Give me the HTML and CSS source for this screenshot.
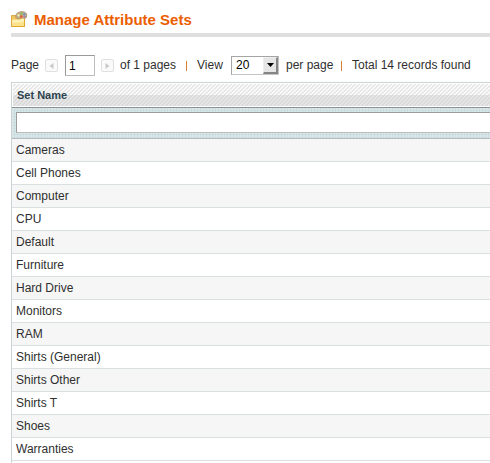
FILE: index.html
```html
<!DOCTYPE html>
<html lang="en">
<head>
<meta charset="utf-8">
<title>Manage Attribute Sets</title>
<link rel="stylesheet" href="styles.css">
</head>
<body>
<main>
<header class="page-head">
<svg class="head-icon" width="17" height="16" viewBox="0 0 17 16">
<path d="M.5 4.500h4l1 2h8v9H.5z" fill="#efc65f" stroke="#dba94a"/>
<path d="M5 6.500C4 3 7 .7 11 .7c3.500 0 5 2 4.700 4-.2 2-1.500 3.300-2.700 2.800-1.500-.8-2 .5-4 .3-2 0-3.500-.1-4-1.300z" fill="#c3ad87" stroke="#a58a66" stroke-width=".8"/>
<circle cx="7.500" cy="4.300" r="1.200" fill="#eee5b0"/>
<circle cx="10.300" cy="2.700" r="1.200" fill="#8fbf69"/>
<circle cx="13.300" cy="3.200" r="1.200" fill="#6f9bcc"/>
<circle cx="10.300" cy="5.600" r="1.300" fill="#e15b36"/>
<circle cx="13.500" cy="5.800" r="1" fill="#a877ad"/>
<path d="M1 8.500h8l1-1h3.500v7.500H1z" fill="#fbe28a"/>
<path d="M1.500 9h8l1-1H13v3L1.500 12z" fill="#fff1b5"/>
<path d="M.5 15.500h13V8" fill="none" stroke="#dfa82e"/>
</svg>
<h1>Manage Attribute Sets</h1>
</header>
<div class="pager">
<span class="text page-label">Page</span>
<span class="arrow"><svg width="5" height="6" viewBox="0 0 5 6"><path d="M4.500 0v6L.5 3z" fill="#c9c9c9"/></svg></span>
<input class="page-input" type="text" value="1" aria-label="Page">
<span class="arrow next"><svg width="5" height="6" viewBox="0 0 5 6"><path d="M.5 0v6l4-3z" fill="#c9c9c9"/></svg></span>
<span class="text count">of 1 pages</span>
<span class="sep"></span>
<span class="text view">View</span>
<span class="select"><span class="value">20</span><span class="drop"><svg width="7" height="4" viewBox="0 0 7 4"><path d="M0 0h7L3.500 4z"/></svg></span></span>
<span class="text per">per page</span>
<span class="sep"></span>
<span class="text total">Total 14 records found</span>
</div>
<section class="grid">
<div class="heading">Set Name</div>
<div class="filter"><input type="text" aria-label="Set Name"></div>
<div class="row">Cameras</div>
<div class="row">Cell Phones</div>
<div class="row">Computer</div>
<div class="row">CPU</div>
<div class="row">Default</div>
<div class="row">Furniture</div>
<div class="row">Hard Drive</div>
<div class="row">Monitors</div>
<div class="row">RAM</div>
<div class="row">Shirts (General)</div>
<div class="row">Shirts Other</div>
<div class="row">Shirts T</div>
<div class="row">Shoes</div>
<div class="row">Warranties</div>
</section>
</main>
</body>
</html>
```
FILE: styles.css
```css
* { box-sizing: border-box; }
body {
  margin: 0;
  background: #fff;
  color: #2f2f2f;
  font: 12px/18px "Liberation Sans", Arial, sans-serif;
  overflow: hidden;
}
main { padding: 11px 0 0 11px; }
.page-head {
  display: flex;
  height: 26px;
  border-bottom: 4px solid #dfdfdf;
}
.head-icon { flex: none; }
h1 {
  margin: 0 0 0 6px;
  color: #eb5e00;
  font-size: 15px;
  line-height: 18px;
  white-space: nowrap;
}
.pager {
  display: flex;
  align-items: center;
  height: 21px;
  margin: 18px 0 6px;
  white-space: nowrap;
}
.text { padding-bottom: 2px; }
.page-label { width: 34px; }
.arrow {
  display: flex;
  align-items: center;
  justify-content: center;
  width: 13px;
  height: 13px;
  border: 1px solid #e0e0e0;
  border-radius: 2px;
  background: #fafafa;
}
.page-input {
  width: 30px;
  height: 21px;
  margin: 0 6px 0 7px;
  padding: 0 3px;
  border: 1px solid;
  border-color: #9a9a9a #bdbdbd #bdbdbd #9a9a9a;
  color: #000;
  font: inherit;
}
.count { width: 66px; margin-left: 6px; }
.sep {
  width: 1px;
  height: 10px;
  margin-top: 1px;
  background: #d8813b;
}
.view { width: 34px; margin-left: 10px; }
.select {
  display: flex;
  justify-content: space-between;
  width: 48px;
  height: 19px;
  border: 1px solid;
  border-color: #a5a5a5 #c5c5c5 #c5c5c5 #a5a5a5;
  color: #000;
}
.value { padding-left: 4px; line-height: 17px; }
.drop {
  display: flex;
  align-items: center;
  justify-content: center;
  width: 15px;
  border: solid;
  border-width: 1px 2px 2px 1px;
  border-color: #eee #858585 #858585 #eee;
  background: #e5e5e5;
}
.per { width: 55px; margin-left: 7px; }
.total { margin-left: 10px; }
.grid {
  height: 381px;
  border-top: 1px solid #cbd3d4;
  border-left: 1px solid #cbd3d4;
}
.heading {
  height: 24px;
  padding-left: 4px;
  border: solid #fff;
  border-width: 1px 0 1px 1px;
  background:
    linear-gradient(transparent 11px, rgba(185, 185, 185, .3) 11px),
    repeating-linear-gradient(135deg, #fafafa 0 1.414px, #e7e7e7 1.414px 2.828px);
  color: #2d444f;
  font-size: 11px;
  font-weight: bold;
  line-height: 22px;
}
.filter {
  height: 32px;
  padding: 4px 0 0 4px;
  border-top: 1px solid #8c9192;
  border-bottom: 1px solid #b5bcbd;
  background:
    repeating-linear-gradient(90deg, transparent 0 2px, rgba(185, 209, 213, .4) 2px 3px),
    repeating-linear-gradient(#d9e7e9 0 2px, #cfdfe2 2px 3px);
}
.filter input {
  display: block;
  width: 100%;
  height: 21px;
  border: 1px solid;
  border-color: #9c9c9c #fff #bdbdbd #9c9c9c;
  border-right: 0;
}
.row {
  height: 23px;
  padding-left: 4px;
  border-bottom: 1px solid #dae0e1;
  line-height: 22px;
}
.row:nth-child(odd) { background: #f6f6f6; }
```
